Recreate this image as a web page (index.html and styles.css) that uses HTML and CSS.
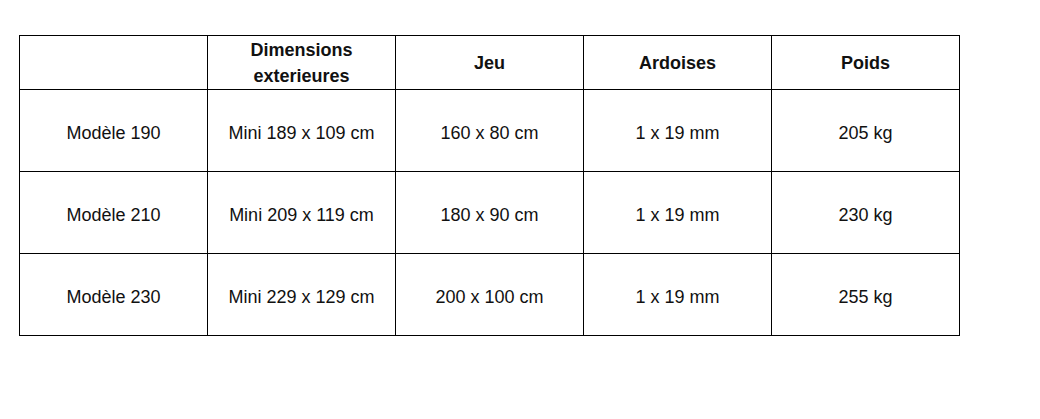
FILE: index.html
```
<!DOCTYPE html>
<html lang="fr">
<head>
<meta charset="utf-8">
<title>Dimensions</title>
<link rel="stylesheet" href="styles.css">
</head>
<body>
<table class="spec">
  <colgroup>
    <col class="c"><col class="c"><col class="c"><col class="c"><col class="c">
  </colgroup>
  <thead>
    <tr class="head">
      <th></th>
      <th>Dimensions<br>exterieures</th>
      <th>Jeu</th>
      <th>Ardoises</th>
      <th>Poids</th>
    </tr>
  </thead>
  <tbody>
    <tr class="row">
      <td>Modèle 190</td>
      <td>Mini 189 x 109 cm</td>
      <td>160 x 80 cm</td>
      <td>1 x 19 mm</td>
      <td>205 kg</td>
    </tr>
    <tr class="row">
      <td>Modèle 210</td>
      <td>Mini 209 x 119 cm</td>
      <td>180 x 90 cm</td>
      <td>1 x 19 mm</td>
      <td>230 kg</td>
    </tr>
    <tr class="row">
      <td>Modèle 230</td>
      <td>Mini 229 x 129 cm</td>
      <td>200 x 100 cm</td>
      <td>1 x 19 mm</td>
      <td>255 kg</td>
    </tr>
  </tbody>
</table>
</body>
</html>
```
FILE: styles.css
```
html, body {
  margin: 0;
  padding: 0;
  background: #ffffff;
}
body {
  font-family: "Liberation Sans", Arial, sans-serif;
  color: #111111;
}
.spec {
  margin: 35px 0 0 19px;
  border-collapse: collapse;
  table-layout: fixed;
  width: 941px;
}
.spec .c {
  width: 188px;
}
.spec th,
.spec td {
  border: 1px solid #000000;
  text-align: center;
  vertical-align: middle;
  padding: 0;
  font-size: 18px;
  box-sizing: border-box;
}
.spec th {
  font-weight: bold;
  line-height: 26px;
  padding-top: 1px;
}
.spec .head th {
  height: 54px;
}
.spec .row td {
  height: 82px;
  padding-top: 5px;
}
```
